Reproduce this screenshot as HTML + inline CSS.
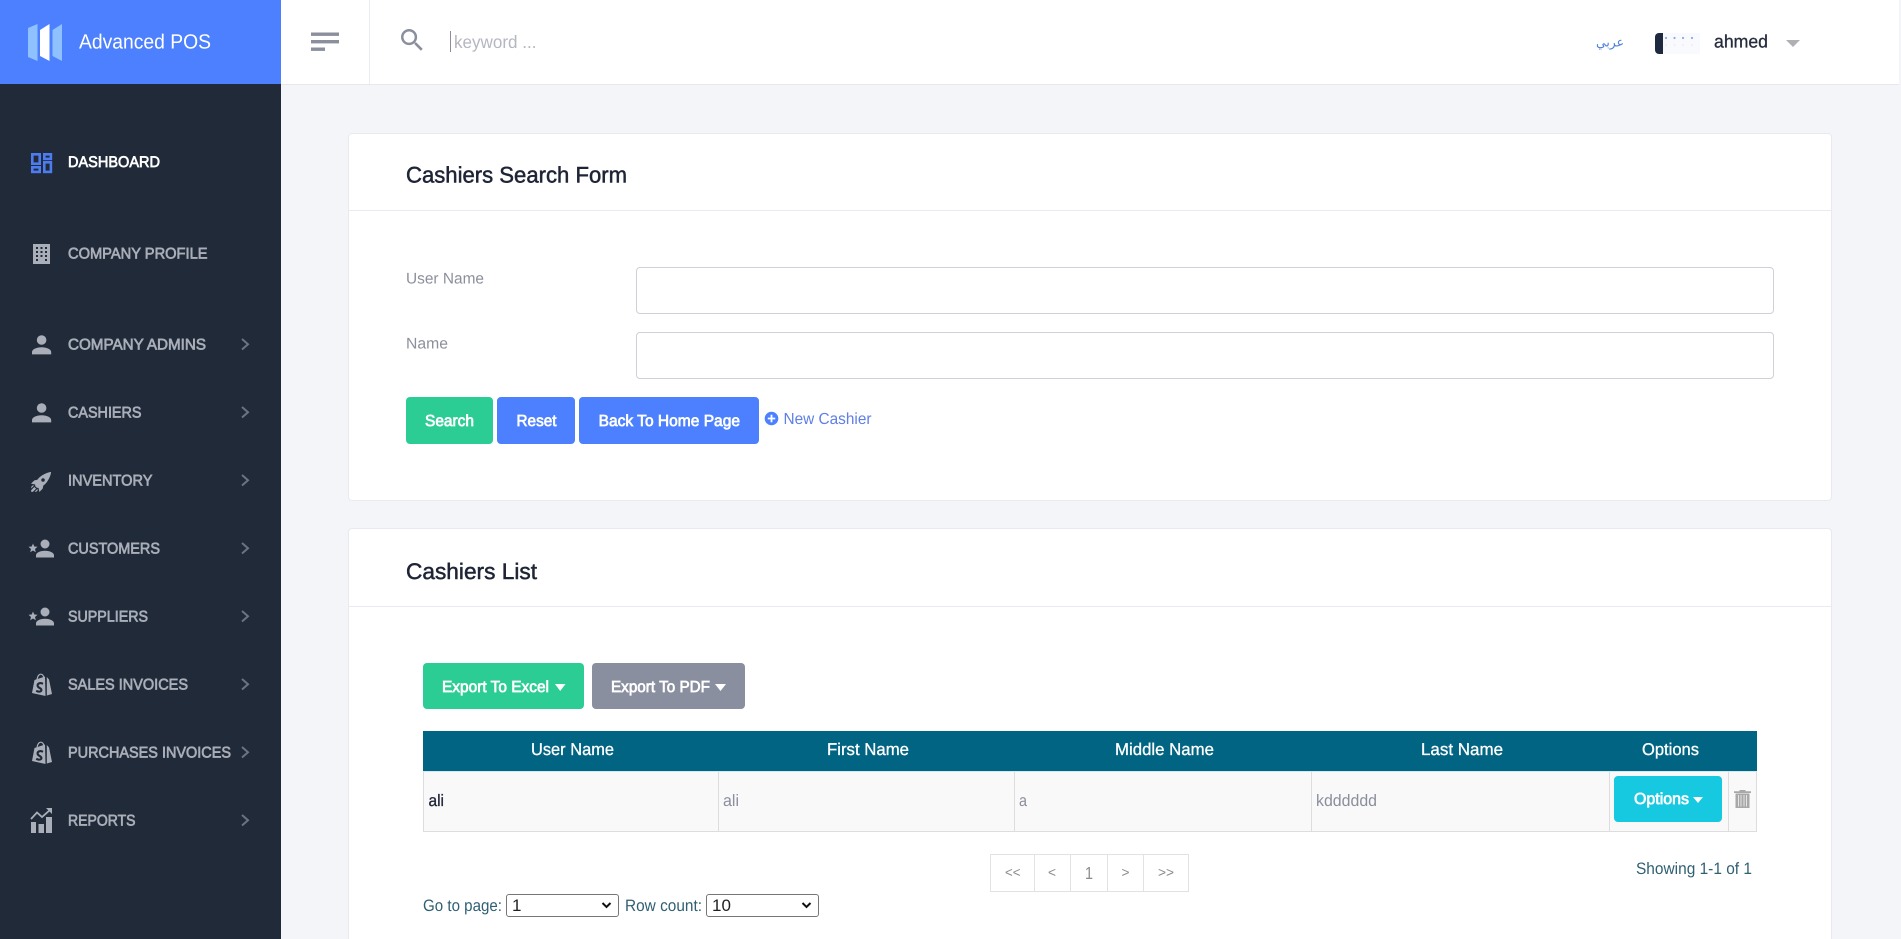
<!DOCTYPE html>
<html lang="en">
<head>
<meta charset="utf-8">
<title>Advanced POS</title>
<style>
html,body{margin:0;padding:0;width:1901px;height:939px;overflow:hidden;background:#f4f5f9;font-family:"Liberation Sans","DejaVu Sans",sans-serif}
.b{position:absolute;box-sizing:border-box}
svg.o{position:absolute;left:0;top:0;pointer-events:none}
svg.o text{font-family:"Liberation Sans","DejaVu Sans",sans-serif;text-rendering:geometricPrecision}
.m{stroke:currentColor;stroke-width:.7px}
.s{color:#a9aeb9;fill:#a9aeb9;font-size:15.5px}
.h{color:#fff;fill:#fff;font-size:17px;stroke:#fff;stroke-width:.3px}
select{position:absolute;box-sizing:border-box;height:23px;width:113px;top:894px;font:17px "Liberation Sans",sans-serif;color:#222;background:#fff;border:1px solid #767676;border-radius:3px;padding:0 0 0 5px;appearance:none;-webkit-appearance:none}
input{position:absolute;box-sizing:border-box;left:636px;width:1138px;height:47px;border:1px solid #ced1d8;border-radius:4px;background:#fff}
</style>
</head>
<body>
<div class="b" style="left:0;top:0;width:1899px;height:85px;background:#fff;border-bottom:1px solid #e6e8ee"></div>
<div class="b" style="left:369px;top:0;width:1px;height:84px;background:#eaecf0"></div>
<div class="b" style="left:0;top:0;width:281px;height:84px;background:#4c80fe"></div>
<div class="b" style="left:0;top:84px;width:281px;height:855px;background:#202a38"></div>

<div class="b" style="left:348px;top:133px;width:1484px;height:368px;background:#fff;border:1px solid #e8eaef;border-radius:4px"></div>
<div class="b" style="left:348px;top:210px;width:1484px;height:1px;background:#e8eaef"></div>
<div class="b" style="left:348px;top:528px;width:1484px;height:411px;background:#fff;border:1px solid #e8eaef;border-bottom:0;border-radius:4px 4px 0 0"></div>
<div class="b" style="left:348px;top:606px;width:1484px;height:1px;background:#e8eaef"></div>

<input type="text" style="top:267px" aria-label="User Name">
<input type="text" style="top:332px" aria-label="Name">

<div class="b" style="left:406px;top:397px;width:87px;height:47px;background:#2ccd94;border-radius:4px"></div>
<div class="b" style="left:497px;top:397px;width:78px;height:47px;background:#4c80fe;border-radius:4px"></div>
<div class="b" style="left:579px;top:397px;width:180px;height:47px;background:#4c80fe;border-radius:4px"></div>

<div class="b" style="left:423px;top:663px;width:161px;height:46px;background:#2ccd94;border-radius:4px"></div>
<div class="b" style="left:592px;top:663px;width:153px;height:46px;background:#8a8f9f;border-radius:4px"></div>

<div class="b" style="left:423px;top:731px;width:1334px;height:40px;background:#006482"></div>
<div class="b" style="left:423px;top:771px;width:1334px;height:61px;background:#f9f9f9;border:1px solid #ddd;border-top:0"></div>
<div class="b" style="left:423px;top:771px;width:1334px;height:1px;background:#cfeaf0"></div>
<div class="b" style="left:718px;top:772px;width:1px;height:59px;background:#ddd"></div>
<div class="b" style="left:1014px;top:772px;width:1px;height:59px;background:#ddd"></div>
<div class="b" style="left:1311px;top:772px;width:1px;height:59px;background:#ddd"></div>
<div class="b" style="left:1609px;top:772px;width:1px;height:59px;background:#ddd"></div>
<div class="b" style="left:1728px;top:772px;width:1px;height:59px;background:#ddd"></div>
<div class="b" style="left:1614px;top:776px;width:108px;height:46px;background:#17c9e0;border-radius:4px"></div>

<div class="b" style="left:990px;top:854px;width:199px;height:38px;border:1px solid #e2e2e2"></div>
<div class="b" style="left:1034px;top:854px;width:1px;height:38px;background:#e2e2e2"></div>
<div class="b" style="left:1070px;top:854px;width:1px;height:38px;background:#e2e2e2"></div>
<div class="b" style="left:1107px;top:854px;width:1px;height:38px;background:#e2e2e2"></div>
<div class="b" style="left:1143px;top:854px;width:1px;height:38px;background:#e2e2e2"></div>

<select style="left:506px" aria-label="Go to page"><option>1</option></select>
<select style="left:706px" aria-label="Row count"><option>10</option></select>

<div class="b" style="left:1662px;top:33px;width:38px;height:21px;background:#f8fafd"></div>
<div class="b" style="left:1655px;top:33px;width:8px;height:21px;background:#1d2a3f;border-radius:4px 0 0 4px"></div>

<svg class="o" width="1901" height="939" viewBox="0 0 1901 939" xmlns="http://www.w3.org/2000/svg">
  <!-- logo -->
  <polygon points="28,28 37.5,24 37.5,61 28,57" fill="#8fc1ff"/>
  <polygon points="40,30 49.5,24 49.5,61 40,56" fill="#fff"/>
  <polygon points="52.5,30 62,24 62,61 52.5,56" fill="#8fc1ff"/>
  <text x="79" y="48.5" font-size="20.5" fill="#fff" textLength="132" lengthAdjust="spacingAndGlyphs">Advanced POS</text>

  <!-- hamburger -->
  <rect x="311" y="32.5" width="28" height="3.4" fill="#8a8f9b"/>
  <rect x="311" y="40" width="28" height="3.4" fill="#8a8f9b"/>
  <rect x="311" y="47.5" width="14" height="3.4" fill="#8a8f9b"/>

  <!-- search -->
  <path transform="translate(397.3 25.3) scale(1.24)" fill="#8a8f9b" d="M9.5,3A6.5,6.5 0 0,1 16,9.5C16,11.11 15.41,12.59 14.44,13.73L14.71,14H15.5L20.5,19L19,20.5L14,15.5V14.71L13.73,14.44C12.59,15.41 11.11,16 9.5,16A6.5,6.5 0 0,1 3,9.5A6.5,6.5 0 0,1 9.5,3M9.5,5C7,5 5,7 5,9.5C5,12 7,14 9.5,14C12,14 14,12 14,9.5C14,7 12,5 9.5,5Z"/>
  <rect x="450" y="31" width="1" height="21" fill="#8a8f9b"/>
  <text x="454" y="48" font-size="18" fill="#b4b7bf" textLength="82.5" lengthAdjust="spacingAndGlyphs">keyword ...</text>

  <!-- header right -->
  <text x="1596" y="46.5" font-size="13" fill="#4f7fd8" style="font-family:'DejaVu Sans',sans-serif" textLength="28" lengthAdjust="spacingAndGlyphs">عربي</text>
  <g fill="#8ea8ec">
    <circle cx="1666" cy="38" r="1.1"/><circle cx="1674.5" cy="38" r="1.1"/><circle cx="1683" cy="38" r="1.1"/><circle cx="1692" cy="38" r="1.1"/>
  </g>
  <g fill="#e4e8f0">
    <circle cx="1666" cy="45" r=".8"/><circle cx="1674.5" cy="45" r=".8"/><circle cx="1683" cy="45" r=".8"/><circle cx="1692" cy="45" r=".8"/>
  </g>
  <text x="1714" y="47.5" font-size="18" fill="#262c3d" textLength="54" lengthAdjust="spacingAndGlyphs" stroke="#262c3d" stroke-width=".3">ahmed</text>
  <polygon points="1786,40 1800,40 1793,47" fill="#aeb0b6"/>

  <!-- sidebar icons -->
  <g fill="none" stroke="#4c7cf0" stroke-width="2.6">
    <rect x="32.3" y="154.3" width="7.4" height="9.4"/>
    <rect x="32.3" y="167.3" width="7.4" height="4.6"/>
    <rect x="44.3" y="154.3" width="6.6" height="4.6"/>
    <rect x="44.3" y="162.3" width="6.6" height="9.6"/>
  </g>
  <rect x="33" y="244" width="17" height="20" fill="#a9aeb9"/>
  <g fill="#202a38">
    <rect x="36" y="247" width="2" height="2"/><rect x="40.5" y="247" width="2" height="2"/><rect x="45" y="247" width="2" height="2"/>
    <rect x="36" y="251" width="2" height="2"/><rect x="40.5" y="251" width="2" height="2"/><rect x="45" y="251" width="2" height="2"/>
    <rect x="36" y="255" width="2" height="2"/><rect x="40.5" y="255" width="2" height="2"/><rect x="45" y="255" width="2" height="2"/>
    <rect x="36" y="259" width="2" height="2"/><rect x="45" y="259" width="2" height="2"/>
  </g>

  <defs>
    <path id="pp" d="M12,4A4,4 0 0,1 16,8A4,4 0 0,1 12,12A4,4 0 0,1 8,8A4,4 0 0,1 12,4M12,14C16.42,14 20,15.79 20,18V20H4V18C4,15.79 7.58,14 12,14Z"/>
    <g id="bag">
      <polygon points="32,693 34.5,680 45,676.5 45.5,696"/>
      <polygon points="46.8,677 49,679.5 52,694 46.8,695.5"/>
      <path d="M37,680C37.5,675 40,673.5 42,674.5C43.5,675.5 44,677 44,679" fill="none" stroke="#a9aeb9" stroke-width="1.2"/>
      <path d="M43,683.8C40,682.2 37.3,683.6 37.6,685.8C37.9,688 41.6,688 41.4,690.2C41.2,692 38.4,692 36.2,690.8" fill="none" stroke="#202a38" stroke-width="2.1"/>
    </g>
  </defs>
  <g fill="#a9aeb9">
    <use href="#pp" transform="translate(27.2 330.4) scale(1.2)"/>
    <use href="#pp" transform="translate(27.2 398.4) scale(1.2)"/>
    <path transform="translate(27.7 467) scale(1.18)" d="M2.81,14.12L5.64,11.29L8.17,10.79C11.39,6.41 17.55,4.22 19.78,4.22C19.78,6.45 17.59,12.61 13.21,15.83L12.71,18.36L9.88,21.19L9.17,17.66C7.76,17.66 7.76,17.66 7.05,16.95C6.34,16.24 6.34,16.24 6.34,14.83L2.81,14.12M5.64,16.95L7.05,18.36L4.39,21.03H2.97V19.61L5.64,16.95M4.22,15.54L5.46,15.71L3,18.16V16.74L4.22,15.54M8.29,18.54L8.46,19.78L7.26,21H5.84L8.29,18.54M13,9.5A1.5,1.5 0 0,0 11.5,11A1.5,1.5 0 0,0 13,12.5A1.5,1.5 0 0,0 14.5,11A1.5,1.5 0 0,0 13,9.5Z"/>
    <use href="#pp" transform="translate(31.5 535) scale(1.125)"/>
    <polygon points="33,543.5 34.3,546.5 37.5,546.8 35,549 35.8,552.2 33,550.5 30.2,552.2 31,549 28.5,546.8 31.7,546.5"/>
    <use href="#pp" transform="translate(31.5 603) scale(1.125)"/>
    <polygon points="33,611.5 34.3,614.5 37.5,614.8 35,617 35.8,620.2 33,618.5 30.2,620.2 31,617 28.5,614.8 31.7,614.5"/>
    <use href="#bag"/>
    <use href="#bag" transform="translate(0 68)"/>
    <rect x="31" y="822" width="5" height="11"/>
    <rect x="38.5" y="824" width="5.5" height="9"/>
    <rect x="46" y="817" width="6" height="16"/>
    <polygon points="46,808 52,808 52,814"/>
  </g>
  <polyline points="31,819 37,812.5 42,817 50.5,809.5" fill="none" stroke="#a9aeb9" stroke-width="1.8"/>

  <!-- sidebar labels -->
  <text x="68" y="167" font-size="15.5" fill="#fff" color="#fff" class="m" textLength="92" lengthAdjust="spacingAndGlyphs">DASHBOARD</text>
  <g>
    <text class="s m" x="68" y="258.5" textLength="139.5" lengthAdjust="spacingAndGlyphs">COMPANY PROFILE</text>
    <text class="s m" x="68" y="349.5" textLength="138" lengthAdjust="spacingAndGlyphs">COMPANY ADMINS</text>
    <text class="s m" x="68" y="417.5" textLength="73.5" lengthAdjust="spacingAndGlyphs">CASHIERS</text>
    <text class="s m" x="68" y="485.5" textLength="84.5" lengthAdjust="spacingAndGlyphs">INVENTORY</text>
    <text class="s m" x="68" y="553.5" textLength="92" lengthAdjust="spacingAndGlyphs">CUSTOMERS</text>
    <text class="s m" x="68" y="621.5" textLength="80" lengthAdjust="spacingAndGlyphs">SUPPLIERS</text>
    <text class="s m" x="68" y="689.5" textLength="120" lengthAdjust="spacingAndGlyphs">SALES INVOICES</text>
    <text class="s m" x="68" y="757.5" textLength="163" lengthAdjust="spacingAndGlyphs">PURCHASES INVOICES</text>
    <text class="s m" x="68" y="825.5" textLength="67.5" lengthAdjust="spacingAndGlyphs">REPORTS</text>
  </g>
  <g fill="none" stroke="#6d7480" stroke-width="2">
    <polyline points="242,339 248,344.2 242,349.5"/>
    <polyline points="242,407 248,412.2 242,417.5"/>
    <polyline points="242,475 248,480.2 242,485.5"/>
    <polyline points="242,543 248,548.2 242,553.5"/>
    <polyline points="242,611 248,616.2 242,621.5"/>
    <polyline points="242,679 248,684.2 242,689.5"/>
    <polyline points="242,747 248,752.2 242,757.5"/>
    <polyline points="242,815 248,820.2 242,825.5"/>
  </g>

  <!-- search form -->
  <text x="406" y="182.5" font-size="22.5" fill="#1e2436" color="#1e2436" class="m" textLength="221" lengthAdjust="spacingAndGlyphs" style="stroke-width:.5px">Cashiers Search Form</text>
  <text x="406" y="283.5" font-size="15.5" fill="#8b8f9d" textLength="78" lengthAdjust="spacingAndGlyphs">User Name</text>
  <text x="406" y="348.5" font-size="15.5" fill="#8b8f9d" textLength="42" lengthAdjust="spacingAndGlyphs">Name</text>

  <text x="425" y="426" font-size="16" fill="#fff" color="#fff" class="m" textLength="49" lengthAdjust="spacingAndGlyphs">Search</text>
  <text x="516.5" y="426" font-size="16" fill="#fff" color="#fff" class="m" textLength="40" lengthAdjust="spacingAndGlyphs">Reset</text>
  <text x="598.6" y="426" font-size="16" fill="#fff" color="#fff" class="m" textLength="141.4" lengthAdjust="spacingAndGlyphs">Back To Home Page</text>
  <circle cx="771.5" cy="418.5" r="6.8" fill="#4c80fe"/>
  <path d="M771.5,414.8V422.2M767.8,418.5H775.2" stroke="#fff" stroke-width="1.8" fill="none"/>
  <text x="783.5" y="424" font-size="16" fill="#5f7fe6" textLength="88" lengthAdjust="spacingAndGlyphs">New Cashier</text>

  <!-- list -->
  <text x="406" y="579" font-size="22.5" fill="#1e2436" color="#1e2436" class="m" textLength="131" lengthAdjust="spacingAndGlyphs" style="stroke-width:.5px">Cashiers List</text>
  <text x="442" y="692" font-size="16" fill="#fff" color="#fff" class="m" textLength="107" lengthAdjust="spacingAndGlyphs">Export To Excel</text>
  <polygon points="555,684 565.5,684 560.2,691" fill="#fff"/>
  <text x="611" y="692" font-size="16" fill="#fff" color="#fff" class="m" textLength="99" lengthAdjust="spacingAndGlyphs">Export To PDF</text>
  <polygon points="715,684 726,684 720.5,691" fill="#fff"/>

  <text class="h" x="531" y="755" textLength="83" lengthAdjust="spacingAndGlyphs">User Name</text>
  <text class="h" x="827" y="755" textLength="82" lengthAdjust="spacingAndGlyphs">First Name</text>
  <text class="h" x="1115" y="755" textLength="99" lengthAdjust="spacingAndGlyphs">Middle Name</text>
  <text class="h" x="1421" y="755" textLength="82" lengthAdjust="spacingAndGlyphs">Last Name</text>
  <text class="h" x="1642" y="755" textLength="57" lengthAdjust="spacingAndGlyphs">Options</text>

  <text x="428.5" y="806" font-size="16.5" fill="#1e2436" stroke="#1e2436" stroke-width=".3" textLength="15.5" lengthAdjust="spacingAndGlyphs">ali</text>
  <text x="723" y="806" font-size="16.5" fill="#8b8f9d" textLength="16" lengthAdjust="spacingAndGlyphs">ali</text>
  <text x="1019" y="806" font-size="16.5" fill="#8b8f9d" textLength="8" lengthAdjust="spacingAndGlyphs">a</text>
  <text x="1316" y="806" font-size="16.5" fill="#8b8f9d" textLength="61" lengthAdjust="spacingAndGlyphs">kdddddd</text>
  <text x="1634" y="804" font-size="16" fill="#fff" color="#fff" class="m" textLength="55" lengthAdjust="spacingAndGlyphs">Options</text>
  <polygon points="1693,797 1703,797 1698,803" fill="#fff"/>

  <!-- trash -->
  <path d="M1734,793V791.2H1739.5V790H1745.5V791.2H1751V793Z" fill="#a8a8a8"/>
  <rect x="1735.5" y="793.5" width="14" height="14.5" fill="#a8a8a8"/>
  <path d="M1738.5,795V806.5M1741,795V806.5M1744,795V806.5M1746.5,795V806.5" stroke="#ececec" stroke-width=".9"/>

  <!-- pagination -->
  <g font-size="14" fill="#8a8a8a">
    <text x="1005" y="877" textLength="15.5" lengthAdjust="spacingAndGlyphs">&lt;&lt;</text>
    <text x="1048" y="877" textLength="8" lengthAdjust="spacingAndGlyphs">&lt;</text>
    <text x="1085" y="879" font-size="17.5" textLength="8" lengthAdjust="spacingAndGlyphs">1</text>
    <text x="1121.5" y="877" textLength="8" lengthAdjust="spacingAndGlyphs">&gt;</text>
    <text x="1158" y="877" textLength="16" lengthAdjust="spacingAndGlyphs">&gt;&gt;</text>
  </g>
  <text x="1636" y="874" font-size="16.5" fill="#2f5f73" textLength="116" lengthAdjust="spacingAndGlyphs">Showing 1-1 of 1</text>
  <text x="423" y="911" font-size="16.5" fill="#2f5f73" textLength="79" lengthAdjust="spacingAndGlyphs">Go to page:</text>
  <text x="625" y="911" font-size="16.5" fill="#2f5f73" textLength="77" lengthAdjust="spacingAndGlyphs">Row count:</text>

  <!-- select arrows -->
  <polyline points="602.5,903 606.5,907 610.5,903" fill="none" stroke="#111" stroke-width="2"/>
  <polyline points="802.5,903 806.5,907 810.5,903" fill="none" stroke="#111" stroke-width="2"/>
</svg>
</body>
</html>
